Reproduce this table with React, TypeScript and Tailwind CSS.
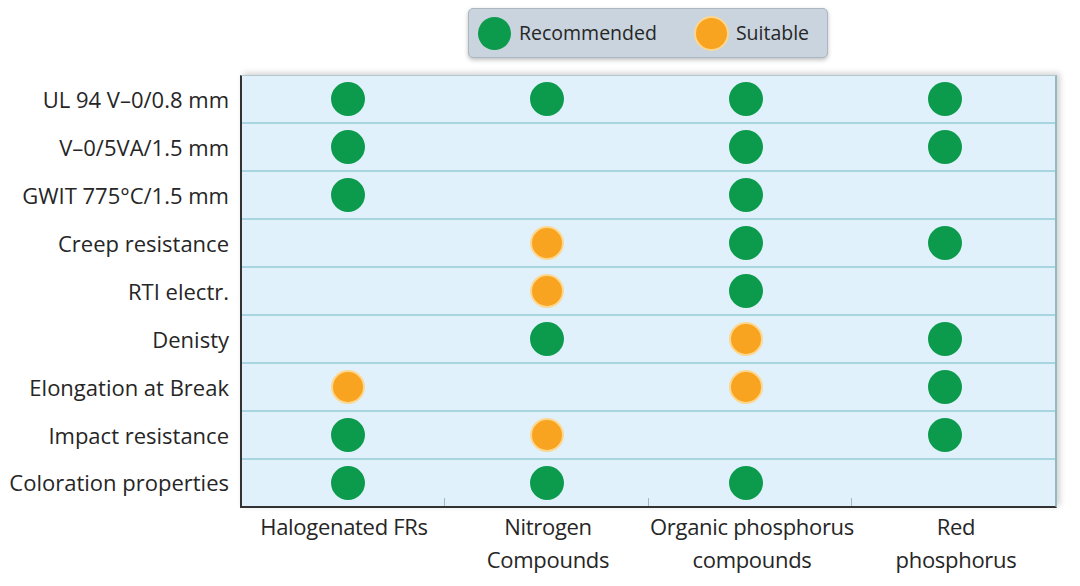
import React from "react";

type V = "G" | "O" | "";

const rows: { label: string; v: V[] }[] = [
  { label: "UL 94 V–0/0.8 mm", v: ["G", "G", "G", "G"] },
  { label: "V–0/5VA/1.5 mm", v: ["G", "", "G", "G"] },
  { label: "GWIT 775°C/1.5 mm", v: ["G", "", "G", ""] },
  { label: "Creep resistance", v: ["", "O", "G", "G"] },
  { label: "RTI electr.", v: ["", "O", "G", ""] },
  { label: "Denisty", v: ["", "G", "O", "G"] },
  { label: "Elongation at Break", v: ["O", "", "O", "G"] },
  { label: "Impact resistance", v: ["G", "O", "", "G"] },
  { label: "Coloration properties", v: ["G", "G", "G", ""] },
];

const cols = [
  ["Halogenated FRs"],
  ["Nitrogen", "Compounds"],
  ["Organic phosphorus", "compounds"],
  ["Red", "phosphorus"],
];

function Dot({ v }: { v: V }) {
  if (v === "G") return <div className="w-[34px] h-[34px] rounded-full bg-[#0c9b4c]" />;
  if (v === "O")
    return <div className="w-[34px] h-[34px] rounded-full bg-[#f8a420] border-2 border-[#fcd790]" />;
  return null;
}

export default function App() {
  return (
    <div
      className="w-[1080px] h-[586px] bg-white text-[#262626] overflow-hidden"
      style={{ fontFamily: '"Open Sans", "Noto Sans", sans-serif' }}
    >
      <div className="pt-[8px] pl-[468px]">
        <div className="w-[360px] h-[50px] rounded-[5px] bg-[#c9d4de] border border-[#aab6c1] shadow-[0_2px_4px_rgba(0,0,0,0.25)] flex items-center pl-[9px]">
          <div className="w-[33px] h-[33px] rounded-full bg-[#0c9b4c]" />
          <span className="ml-[8px] text-[19.5px]">Recommended</span>
          <div className="ml-[37px] w-[35px] h-[35px] rounded-full bg-[#f8a420] border-2 border-[#fcd790]" />
          <span className="ml-[7px] text-[19.5px]">Suitable</span>
        </div>
      </div>

      <div className="flex mt-[17px]">
        <div className="w-[240px] pr-[11px]">
          {rows.map((r, i) => (
            <div
              key={i}
              className={`${i < 8 ? "h-[48px]" : "h-[46px]"} flex items-center justify-end text-[22px] whitespace-nowrap`}
            >
              {r.label}
            </div>
          ))}
        </div>
        <div className="flex flex-col">
          <div className="relative w-[817px] bg-[#e0f1fb] border-l-2 border-l-[#333] border-b-2 border-b-[#333] border-t border-t-[#b5c6cd] border-r-2 border-r-[#93b9c3] shadow-[3px_-2px_6px_rgba(0,0,0,0.18)]">
            {rows.map((r, i) => (
              <div
                key={i}
                className={`${i < 8 ? "h-[48px] border-b-2 border-[#a8d6df]" : "h-[46px]"} grid grid-cols-[199px_199px_199px_199px] pl-[6px] items-center`}
              >
                {r.v.map((v, j) => (
                  <div key={j} className="flex justify-center">
                    <Dot v={v} />
                  </div>
                ))}
              </div>
            ))}
            <div className="absolute left-0 right-0 bottom-0 h-[8px] grid grid-cols-4">
              <div className="border-r border-[#9fb9c2]" />
              <div className="border-r border-[#9fb9c2]" />
              <div className="border-r border-[#9fb9c2]" />
              <div />
            </div>
          </div>
          <div className="grid grid-cols-4 pt-[2px] pl-[2px] pr-[2px]">
            {cols.map((c, i) => (
              <div key={i} className="flex flex-col items-center text-[22px] leading-[33px] tracking-[-0.3px] whitespace-nowrap">
                {c.map((l, k) => (
                  <span key={k}>{l}</span>
                ))}
              </div>
            ))}
          </div>
        </div>
      </div>
    </div>
  );
}
